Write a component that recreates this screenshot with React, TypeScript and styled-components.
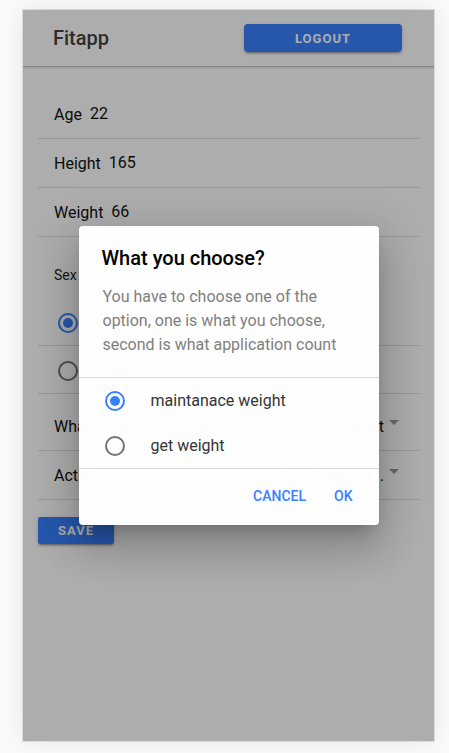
import React from "react";
import styled, { createGlobalStyle } from "styled-components";

const GlobalStyle = createGlobalStyle`
  *, *::before, *::after { box-sizing: border-box; }
  body {
    margin: 0;
    background: #fafafa;
    color: #111;
    font-family: Roboto, "Liberation Sans", sans-serif;
    font-size: 16px;
  }
  button, input, select { font: inherit; color: inherit; }
`;

const Stage = styled.div`
  display: flex;
  min-height: 100vh;
  padding: 10px 15px 12px 23px;
`;

const Screen = styled.div`
  position: relative;
  flex: 1;
  min-width: 0;
  background: #fff;
  box-shadow: 0 0 0 1px rgba(0, 0, 0, 0.1), 0 0 24px rgba(0, 0, 0, 0.08);
`;

const Header = styled.header`
  display: flex;
  align-items: center;
  justify-content: space-between;
  height: 56px;
  padding: 0 32px 0 30px;
  box-shadow: 0 1px 0 rgba(0, 0, 0, 0.12), 0 2px 2px rgba(0, 0, 0, 0.14);
  clip-path: inset(0 0 -4px 0);
`;

const AppTitle = styled.h1`
  margin: 0;
  color: #424242;
  font-size: 20px;
  font-weight: 500;
`;

const SolidButton = styled.button<{ $wide?: boolean }>`
  width: ${(p) => (p.$wide ? "158px" : "76px")};
  height: ${(p) => (p.$wide ? "28px" : "27px")};
  padding: 0;
  border: 0;
  border-radius: ${(p) => (p.$wide ? "4px" : "2px")};
  background: #3880ff;
  color: #fff;
  font-size: 13px;
  font-weight: 700;
  letter-spacing: 1px;
  text-transform: uppercase;
  box-shadow: 0 3px 1px -2px rgba(0, 0, 0, 0.2), 0 2px 2px 0 rgba(0, 0, 0, 0.14),
    0 1px 5px 0 rgba(0, 0, 0, 0.12);
`;

const Form = styled.form`
  padding: 24px 15px 0;
`;

const Row = styled.div`
  display: flex;
  align-items: center;
  height: 49px;
  padding: 0 16px;
  border-bottom: 1px solid #dedede;
`;

const RowLabel = styled.label`
  flex: none;
  margin-right: 8px;
`;

const NumberInput = styled.input`
  flex: 1;
  min-width: 0;
  height: 46px;
  margin-bottom: 2px;
  padding: 0;
  border: 0;
  outline: 0;
  background: transparent;
`;

const Select = styled.select`
  flex: 1;
  min-width: 0;
  padding: 0;
  border: 0;
  background: transparent;
  appearance: none;
  text-align: right;
  text-align-last: right;
  text-overflow: ellipsis;
`;

const Caret = styled.svg`
  flex: none;
  width: 10px;
  height: 5px;
  margin: 0 4px 8px 5px;
  fill: #999;
`;

const SexGroup = styled.fieldset`
  margin: 0 0 8px;
  padding: 0;
  border: 0;
`;

const GroupTitle = styled.legend`
  padding: 30px 16px 14px;
  font-size: 14px;
  line-height: 17px;
  color: #262626;
`;

const RadioRow = styled.label`
  display: flex;
  align-items: center;
  gap: 32px;
  height: 48px;
  padding: 2px 20px 0;
  border-bottom: 1px solid #dedede;
`;

const Radio = styled.input`
  flex: none;
  display: grid;
  place-items: center;
  width: 20px;
  height: 20px;
  margin: 0;
  border: 2px solid #737373;
  border-radius: 50%;
  appearance: none;

  &:checked {
    border-color: #3880ff;
  }
  &:checked::before {
    content: "";
    width: 10px;
    height: 10px;
    border-radius: 50%;
    background: #3880ff;
  }
`;

const SelectRows = styled.div`
  margin-bottom: 17px;
`;

const Backdrop = styled.div`
  position: absolute;
  inset: 0;
  display: flex;
  align-items: center;
  justify-content: center;
  background: rgba(0, 0, 0, 0.32);
`;

const Dialog = styled.section`
  width: 300px;
  border-radius: 4px;
  background: #fff;
  color: #000;
  opacity: 0.99;
  box-shadow: 0 11px 15px -7px rgba(0, 0, 0, 0.2), 0 24px 38px 3px rgba(0, 0, 0, 0.14),
    0 9px 46px 8px rgba(0, 0, 0, 0.12);
`;

const DialogTitle = styled.h2`
  margin: 0;
  padding: 20px 23px 15px;
  font-size: 20px;
  font-weight: 500;
  line-height: 24px;
`;

const DialogMessage = styled.p`
  margin: 0;
  padding: 0 24px 20px;
  color: #808080;
  line-height: 24px;
`;

const Options = styled.div`
  border-top: 1px solid #d9d9d9;
  border-bottom: 1px solid #d9d9d9;
`;

const Option = styled.label`
  display: flex;
  align-items: center;
  gap: 26px;
  height: 45px;
  padding: 0 26px;
  color: #333;
`;

const Actions = styled.div`
  display: flex;
  justify-content: flex-end;
  gap: 8px;
  padding: 9px 16px 11px;
`;

const TextButton = styled.button`
  height: 36px;
  padding: 0 10px;
  border: 0;
  background: transparent;
  color: #3880ff;
  font-size: 14px;
  font-weight: 500;
  text-transform: uppercase;
`;

const measurements = [
  { id: "age", label: "Age", value: "22" },
  { id: "height", label: "Height", value: "165" },
  { id: "weight", label: "Weight", value: "66" },
];

const choices = [
  { id: "purpose", label: "What is your purpose?", value: "More weight" },
  { id: "activity", label: "Activity", value: "I workout per..." },
];

export default function App() {
  return (
    <Stage>
      <GlobalStyle />
      <Screen>
        <Header>
          <AppTitle>Fitapp</AppTitle>
          <SolidButton type="button" $wide>Logout</SolidButton>
        </Header>
        <Form>
          {measurements.map((m) => (
            <Row key={m.id}>
              <RowLabel htmlFor={m.id}>{m.label}</RowLabel>
              <NumberInput id={m.id} inputMode="numeric" defaultValue={m.value} />
            </Row>
          ))}
          <SexGroup>
            <GroupTitle>Sex</GroupTitle>
            <RadioRow>
              <Radio type="radio" name="sex" defaultChecked />
              Woman
            </RadioRow>
            <RadioRow>
              <Radio type="radio" name="sex" />
              Man
            </RadioRow>
          </SexGroup>
          <SelectRows>
            {choices.map((c) => (
              <Row key={c.id}>
                <RowLabel htmlFor={c.id}>{c.label}</RowLabel>
                <Select id={c.id}>
                  <option>{c.value}</option>
                </Select>
                <Caret viewBox="0 0 10 5" aria-hidden="true">
                  <path d="M0 0h10L5 5z" />
                </Caret>
              </Row>
            ))}
          </SelectRows>
          <SolidButton type="button">Save</SolidButton>
        </Form>
        <Backdrop>
          <Dialog role="dialog" aria-modal="true" aria-labelledby="dialog-title">
            <DialogTitle id="dialog-title">What you choose?</DialogTitle>
            <DialogMessage>
              You have to choose one of the option, one is what you choose, second is what
              application count
            </DialogMessage>
            <Options>
              <Option>
                <Radio type="radio" name="weight-plan" defaultChecked />
                maintanace weight
              </Option>
              <Option>
                <Radio type="radio" name="weight-plan" />
                get weight
              </Option>
            </Options>
            <Actions>
              <TextButton type="button">Cancel</TextButton>
              <TextButton type="button">OK</TextButton>
            </Actions>
          </Dialog>
        </Backdrop>
      </Screen>
    </Stage>
  );
}
